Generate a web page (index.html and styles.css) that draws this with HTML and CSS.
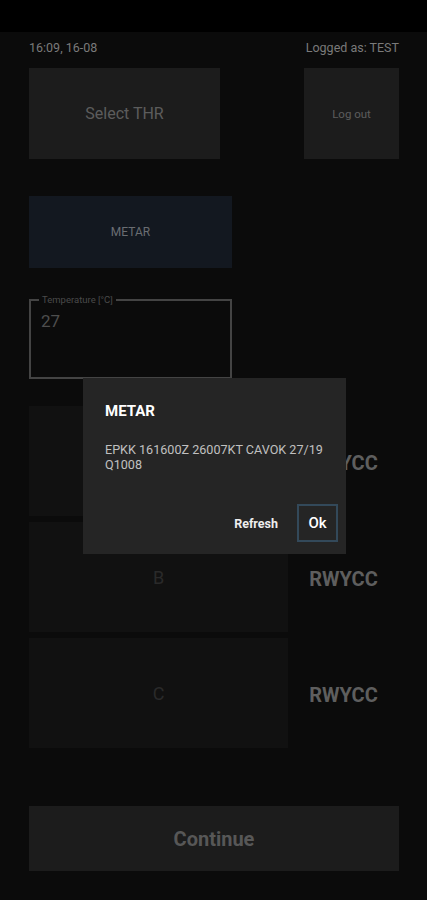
FILE: index.html
```html
<!DOCTYPE html>
<html lang="en">
<head>
    <meta charset="UTF-8">
    <meta name="viewport" content="width=device-width, initial-scale=1.0">
    <title>RWYCC</title>
    <link rel="stylesheet" href="styles.css">
</head>
<body>
    <div class="status-bar"></div>

    <div class="screen">
        <div class="header">
            <span>16:09, 16-08</span>
            <span>Logged as: TEST</span>
        </div>

        <div class="top-row">
            <button class="btn btn-thr">Select THR</button>
            <button class="btn btn-logout">Log out</button>
        </div>

        <button class="btn btn-metar">METAR</button>

        <div class="field">
            <span class="field-label">Temperature [°C]</span>
            <span class="field-value">27</span>
        </div>

        <div class="rows">
            <div class="row">
                <div class="row-box"></div>
                <div class="row-code">RWYCC</div>
            </div>
            <div class="row">
                <div class="row-box">B</div>
                <div class="row-code">RWYCC</div>
            </div>
            <div class="row">
                <div class="row-box">C</div>
                <div class="row-code">RWYCC</div>
            </div>
        </div>

        <button class="btn btn-continue">Continue</button>
    </div>

    <!-- metar dialog -->
    <div class="dialog">
        <div class="dialog-title">METAR</div>
        <p class="dialog-text">EPKK 161600Z 26007KT CAVOK 27/19 Q1008</p>
        <div class="dialog-actions">
            <button class="dlg-btn">Refresh</button>
            <button class="dlg-btn dlg-ok">Ok</button>
        </div>
    </div>
</body>
</html>
```

FILE: styles.css
```css
body {
    margin: 0;
    font-family: Roboto, "Liberation Sans", sans-serif;
    background-color: #0b0b0b;
    color: #6a6a6a;
    position: relative;
    height: 900px;
    overflow: hidden;
}
.status-bar {
    height: 32px;
    background-color: #000;
}
.screen {
    padding: 0 28px 0 29px;
    display: flex;
    flex-direction: column;
}
.header {
    display: flex;
    justify-content: space-between;
    align-items: center;
    height: 30px;
    font-size: 12.5px;
    color: #7a7a7a;
}
.btn {
    border: none;
    font-family: inherit;
    color: #5c5c5c;
    background-color: #1c1c1c;
    padding: 0;
}
.top-row {
    display: flex;
    justify-content: space-between;
    margin-top: 6px;
}
.btn-thr {
    width: 191px;
    height: 91px;
    font-size: 16px;
}
.btn-logout {
    width: 95px;
    height: 91px;
    font-size: 11.5px;
}
.btn-metar {
    margin-top: 37px;
    width: 203px;
    height: 72px;
    font-size: 12px;
    background-color: #131820;
    color: #6a6d72;
}
.field {
    margin-top: 31px;
    width: 203px;
    height: 80px;
    box-sizing: border-box;
    border: 2px solid #444;
    position: relative;
    padding: 10px 10px;
}
.field-label {
    position: absolute;
    top: -7px;
    left: 8px;
    padding: 0 3px;
    background-color: #0b0b0b;
    font-size: 9.5px;
    color: #4a4a4a;
}
.field-value {
    font-size: 17px;
    color: #4e4e4e;
}
.rows {
    margin-top: 27px;
    display: flex;
    flex-direction: column;
    gap: 6px;
}
.row {
    display: flex;
    align-items: center;
}
.row-box {
    width: 259px;
    height: 110px;
    background-color: #111;
    display: flex;
    align-items: center;
    justify-content: center;
    font-size: 18px;
    color: #2a2a2a;
}
.row-code {
    flex: 1;
    padding-top: 3px;
    text-align: center;
    font-size: 20px;
    font-weight: bold;
    color: #5e5e5e;
}
.btn-continue {
    margin-top: 58px;
    width: 370px;
    height: 65px;
    font-size: 20px;
    font-weight: bold;
    color: #575757;
}
.dialog {
    position: absolute;
    left: 83px;
    top: 378px;
    width: 263px;
    height: 176px;
    box-sizing: border-box;
    background-color: #252525;
    padding: 24px 8px 12px 22px;
    display: flex;
    flex-direction: column;
}
.dialog-title {
    font-size: 15px;
    font-weight: bold;
    color: #fff;
}
.dialog-text {
    margin: 22px 10px 0 0;
    font-size: 12.6px;
    line-height: 15px;
    color: #c0c0c0;
}
.dialog-actions {
    margin-top: auto;
    display: flex;
    justify-content: flex-end;
    align-items: center;
    gap: 19px;
}
.dlg-btn {
    border: none;
    background: none;
    font-family: inherit;
    font-size: 12.5px;
    font-weight: bold;
    color: #eee;
    padding: 0;
}
.dlg-ok {
    width: 41px;
    height: 38px;
    border: 2px solid #33495a;
    font-size: 15px;
    font-weight: 500;
    color: #fff;
}
```
